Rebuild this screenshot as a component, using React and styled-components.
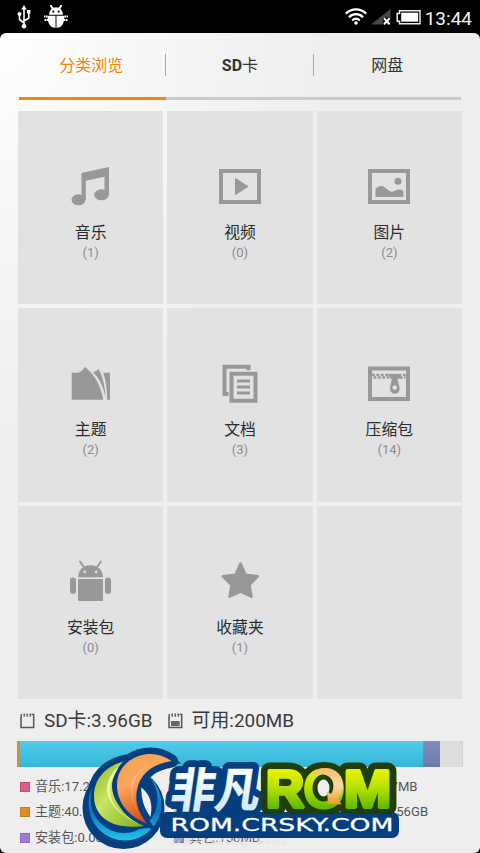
import React from 'react';
import styled, { createGlobalStyle } from 'styled-components';

const GlobalStyle = createGlobalStyle`
  * {
    box-sizing: border-box;
  }

  body {
    margin: 0;
    background: #000;
    font-family: Roboto, 'Noto Sans CJK SC', sans-serif;
    color: #333;
  }

  svg {
    display: block;
  }
`;

const Screen = styled.div`
  position: relative;
  width: 480px;
  height: 853px;
  overflow: hidden;
  display: flex;
  flex-direction: column;
  background: #000;
`;

const StatusBar = styled.header`
  height: 33px;
  flex: none;
  display: flex;
  align-items: center;
  justify-content: space-between;
  padding: 0 8px 0 17px;
`;

const StatusGroup = styled.div`
  display: flex;
  align-items: center;
  gap: ${(props) => props.$gap}px;
`;

const Clock = styled.span`
  font-size: 19px;
  line-height: 33px;
  color: #f4f4f4;
  padding-top: 4px;
`;

const Panel = styled.main`
  flex: 1;
  display: flex;
  flex-direction: column;
  padding: 0 18px;
  border-radius: 6px;
  background: radial-gradient(ellipse 330px 420px at 0 0, #fff 0, #f8f8f8 35%, #eee 100%);
`;

const Tabs = styled.nav`
  display: grid;
  grid-template-columns: repeat(3, 1fr);
  height: 67px;
  flex: none;
  margin: 0 1px;
`;

const Tab = styled.div`
  position: relative;
  display: flex;
  justify-content: center;
  padding: 21px ${(props) => (props.$active ? 3 : 0)}px 0 0;
  font-size: 16px;
  line-height: 24px;
  color: ${(props) => (props.$active ? '#f5850a' : '#333')};
  border-bottom: 3px solid ${(props) => (props.$active ? '#f5850a' : '#cbcbcb')};

  b {
    font-weight: 700;
  }

  &:not(:first-child)::before {
    content: '';
    position: absolute;
    left: -1px;
    top: 21px;
    width: 1px;
    height: 22px;
    background: #aaa;
  }
`;

const Grid = styled.section`
  display: grid;
  grid-template-columns: repeat(3, 1fr);
  grid-template-rows: repeat(3, 1fr);
  gap: 4px;
  height: 588px;
  flex: none;
  margin-top: 11px;
`;

const Tile = styled.div`
  display: flex;
  flex-direction: column;
  align-items: center;
  padding-top: 52px;
  background: #e2e2e2;
`;

const TileLabel = styled.div`
  margin-top: 11px;
  font-size: 15.8px;
  line-height: 22px;
  color: #2c2c2c;
`;

const TileCount = styled.div`
  font-size: 13px;
  line-height: 18px;
  color: #8c8c8c;
`;

const Storage = styled.div`
  display: flex;
  align-items: center;
  height: 42px;
  padding: 2px 0 0 2px;
`;

const StorageText = styled.span`
  margin: 0 15px 0 9px;
  font-size: 18.9px;
  line-height: 24px;
  color: #3a3a3a;
`;

const UsageBar = styled.div`
  display: flex;
  flex: none;
  height: 26px;
  margin: 0 -1px;
  background: #ddd;
  border: 1px solid #d3d3d3;
  border-width: 0 1px 0 0;
`;

const UsagePart = styled.div`
  width: ${(props) => props.$width}px;
  background: ${(props) => props.$fill};
`;

const Legend = styled.div`
  display: grid;
  grid-template-columns: 154px 154px 1fr;
  grid-auto-rows: 25.5px;
  margin: 7px 0 0 2px;
`;

const LegendItem = styled.div`
  display: flex;
  align-items: center;
  gap: 5px;
  white-space: nowrap;
  font-size: 13.1px;
  line-height: 20px;
  color: #555;
`;

const Swatch = styled.i`
  width: 10px;
  height: 10px;
  background: ${(props) => props.$color};
  box-shadow: inset 0 0 0 1px rgba(0, 0, 0, 0.12);
`;

const LogoOverlay = styled.svg`
  position: absolute;
  left: 78px;
  top: 743px;
  width: 326px;
  height: 110px;
`;

const GREY = '#989898';

const UsbIcon = () => (
  <svg width="14" height="24" viewBox="0 0 14 24" fill="none" stroke="#fff" strokeWidth="1.6">
    <path d="M7 3v18M7 18 2.500 14.500V9.500M7 16l4.800-3V8" />
    <path d="M7 0l2.800 4.500H4.200zM10 5h3.400v3.400H10z" fill="#fff" stroke="none" />
    <circle cx="2.500" cy="9" r="2" fill="#fff" stroke="none" />
    <circle cx="7" cy="21.300" r="2.300" fill="#fff" stroke="none" />
  </svg>
);

const BugIcon = () => (
  <svg width="24" height="24" viewBox="0 0 24 24">
    <path d="M7 1l2 3M17 1l-2 3" stroke="#fff" strokeWidth="2.200" strokeLinecap="round" />
    <path d="M5 9.800a7 7.500 0 0 1 14 0z" fill="#fff" />
    <path d="M3.500 10.800h8v12.200C6 22.500 3.500 18.500 3.500 10.800zM12.500 10.800h8c0 7.700-2.500 11.700-8 12.200z" fill="#fff" />
    <circle cx="9.300" cy="6.600" r="1.100" />
    <circle cx="14.700" cy="6.600" r="1.100" />
    <path d="M0 11.500h3.500M.5 15h3.500M20.500 11.500H24M20 15h3.500" stroke="#fff" strokeWidth="2" strokeDasharray="1.500 .5" />
  </svg>
);

const WifiIcon = () => (
  <svg width="22" height="17" viewBox="0 0 22 17" fill="none" stroke="#fff" strokeWidth="2.200">
    <path d="M.8 5.600C6.500-.1 15.500-.1 21.200 5.600M4 9.200c4-4 10-4 14 0M7.200 12.500c2.300-2.200 5.300-2.200 7.600 0" />
    <circle cx="11" cy="15" r="1.800" fill="#fff" stroke="none" />
  </svg>
);

const SignalIcon = () => (
  <svg width="21" height="18" viewBox="0 0 21 18">
    <path d="M0 16.500 19.500 1v15.500z" fill="#464646" />
    <path d="M12.800 10.300l6 6.200M18.800 10.300l-6 6.200" stroke="#000" strokeWidth="4.500" />
    <path d="M13 10.300l5.600 6M18.600 10.300l-5.600 6" stroke="#fff" strokeWidth="2" />
  </svg>
);

const BatteryIcon = () => (
  <svg width="25" height="19" viewBox="0 0 25 19">
    <path d="M3.500 3.700h20.500v13H3.500v-2.400H1.200V6.500h2.300z" fill="none" stroke="#eee" strokeWidth="1.500" />
    <path d="M5.200 5.700h17v9h-17z" fill="#fff" />
  </svg>
);

// every tile icon is drawn on a 48x48 box
const icons = {
  music: (
    <g transform="translate(-1 -.5)">
      <path d="M15.500 10.500 43 4.500v27.500h-4.500V14.200L19.800 18.200v19.300h-4.300z" />
      <ellipse cx="12.500" cy="37.300" rx="7" ry="5.500" />
      <ellipse cx="35.500" cy="32.300" rx="7.300" ry="5.500" />
    </g>
  ),
  video: (
    <>
      <path fillRule="evenodd" d="M3 6h42v35H3zM7 10v27h34V10z" />
      <path d="M19.500 15.500 32 23.500 19.500 31.500z" stroke={GREY} strokeLinejoin="round" />
    </>
  ),
  image: (
    <>
      <path fillRule="evenodd" d="M3 6h42v35H3zM7 10v27h34V10z" />
      <circle cx="33" cy="18.300" r="3.500" />
      <path d="M10.500 34v-8c3-3.500 7-4 10-1l4 3c3 2 5-.5 8-1.300 3-.7 5.500 0 6 2V34z" />
    </>
  ),
  theme: (
    <>
      <path d="M4.700 12.700h5.800c3-.3 5-2.500 7.500-5.700C28 15 34 26 36.300 39.700H4.700z" />
      <path d="M26 12c3-.3 4-1.700 5.500-3 4.500 8 6.500 17.500 7.200 29.500C36.500 27 33 19 26 12z" />
      <path d="M36.200 12.800H43v26.900h-2.800c-.1-10-1-18.500-4-26.900z" />
    </>
  ),
  doc: (
    <>
      <path d="M6.500 4.700h28v5.500h-4V8.700h-20V32h2v4h-6z" />
      <path fillRule="evenodd" d="M13.500 11.700h28v31h-28zM17.500 15.700v23h20v-23z" />
      <path d="M21 19.500h13v3H21zM21 25.500h13v3H21zM21 31.500h13v3H21z" />
    </>
  ),
  zip: (
    <>
      <path fillRule="evenodd" d="M3 6.500h42v34.500H3zM7 10.500v26.500h34V10.500z" />
      <path d="M7 15h34" stroke={GREY} strokeWidth="2.600" strokeDasharray="2.800 1.600" />
      <path d="M8.500 17.500h32" stroke={GREY} strokeWidth="2.600" strokeDasharray="2.800 1.600" />
      <path d="M22.500 14h13v4.500h-3.300l2.200 8.300a5 5 0 1 1-9.200 0l1.500-7.300z" />
      <circle cx="29.700" cy="27.500" r="2.200" fill="#e2e2e2" />
    </>
  ),
  apk: (
    <g transform="translate(-.5 -1)">
      <path d="M13.500 4.500 18 11M34.500 4.500 30 11" stroke={GREY} strokeWidth="1.900" strokeLinecap="round" />
      <path d="M11.500 20.200C12 12.500 17 8.300 24 8.300s12 4.200 12.500 11.900z" />
      <path d="M11.500 22H36.500v22H13c-1 0-1.500-.5-1.500-1.500z" />
      <rect x="3.500" y="20.500" width="6" height="16.500" rx="3" />
      <rect x="38.500" y="20.500" width="6" height="16.500" rx="3" />
      <circle cx="18.300" cy="14.800" r="1.400" fill="#e2e2e2" />
      <circle cx="29.700" cy="14.800" r="1.400" fill="#e2e2e2" />
    </g>
  ),
  star: (
    <path
      d="M24.500 5.500 29.500 16.800 41.700 18.300 33.500 27 35.500 38.700 24.500 33.500 13.500 38.700 15.500 27 6.800 18.300 19.500 16.800z"
      stroke={GREY}
      strokeWidth="2.500"
      strokeLinejoin="round"
    />
  ),
};

const SdIcon = ({ filled }) => (
  <svg width="15" height="16" viewBox="0 0 15 16" fill="none" stroke="#555" strokeWidth="1.500">
    <path d="M11.500 1.500h2.200V14.500H1V4" />
    <path d="M1.200 4.800V1M4.200 3.800V.5M7.200 3.800V.5M10.200 3.800V.5" strokeWidth="1.400" />
    {filled && <path d="M3 8h8.700v5H3z" fill="#666" stroke="none" />}
  </svg>
);

const categories = [
  { icon: 'music', label: '音乐', count: 1 },
  { icon: 'video', label: '视频', count: 0 },
  { icon: 'image', label: '图片', count: 2 },
  { icon: 'theme', label: '主题', count: 2 },
  { icon: 'doc', label: '文档', count: 3 },
  { icon: 'zip', label: '压缩包', count: 14 },
  { icon: 'apk', label: '安装包', count: 0 },
  { icon: 'star', label: '收藏夹', count: 1 },
];

const usage = [
  { width: 3, fill: '#dd8b27' },
  { width: 403, fill: 'linear-gradient(#50cdea, #35b5d8)' },
  { width: 17, fill: 'linear-gradient(#8090bd, #6c7bab)' },
];

const legend = [
  { label: '音乐:17.2MB', color: '#dd5a8b' },
  { label: '视频:0.00B', color: '#5aa9dd' },
  { label: '图片:4.77MB', color: '#7fb84a' },
  { label: '主题:40.1MB', color: '#dd8f24' },
  { label: '文档:0.1MB', color: '#d9c84a' },
  { label: '压缩包:3.56GB', color: '#46c3e2' },
  { label: '安装包:0.00B', color: '#9c7bd6' },
  { label: '其它:158MB', color: '#7887b5' },
];

const crest = 'M171.700 761C163 755 154 753 145 754.500C129 757 117 769 117 785C117 804 130 817 147 823.500C138 812 134.500 801 137 790C140 774 152 764 171.700 761Z';
const leaf = 'M126 761C106 765 94 779 94 796C94 817 112 831 147 825.500C126 815 113 804 112 787C112 777 117 768 126 761Z';

const RomLetters = () => (
  <>
    <text x="266" y="806.500" textLength="38" lengthAdjust="spacingAndGlyphs">R</text>
    <text x="304" y="806.500" textLength="40" lengthAdjust="spacingAndGlyphs">O</text>
    <text x="344" y="806.500" textLength="47" lengthAdjust="spacingAndGlyphs">M</text>
  </>
);

const SiteLogo = () => (
  <LogoOverlay viewBox="78 743 326 110">
    <defs>
      <linearGradient id="ring" x1="0" y1="0" x2="0" y2="1">
        <stop offset="0" stopColor="#20a8e0" />
        <stop offset=".6" stopColor="#0d72bb" />
        <stop offset="1" stopColor="#20c6ec" />
      </linearGradient>
      <linearGradient id="leaf" x1="0" y1="0" x2="1" y2="1">
        <stop offset="0" stopColor="#86b520" />
        <stop offset=".4" stopColor="#c9e566" />
        <stop offset="1" stopColor="#78ad12" />
      </linearGradient>
      <linearGradient id="crest" x1="0" y1="0" x2=".4" y2="1">
        <stop offset="0" stopColor="#f5a04c" />
        <stop offset=".45" stopColor="#f9a75e" />
        <stop offset="1" stopColor="#d44c0e" />
      </linearGradient>
      <linearGradient id="ice" x1="0" y1="0" x2="0" y2="1">
        <stop offset=".3" stopColor="#fff" />
        <stop offset="1" stopColor="#bfe3f8" />
      </linearGradient>
      <linearGradient id="lime" gradientUnits="userSpaceOnUse" x1="0" y1="768" x2="0" y2="808">
        <stop offset="0" stopColor="#eff500" />
        <stop offset=".5" stopColor="#b5e000" />
        <stop offset="1" stopColor="#62b800" />
      </linearGradient>
      <linearGradient id="amber" x1="0" y1="0" x2="0" y2="1">
        <stop offset="0" stopColor="#f4bd72" />
        <stop offset=".5" stopColor="#fbd9a0" />
        <stop offset="1" stopColor="#eb9a22" />
      </linearGradient>
    </defs>

    <text x="171" y="844" fontFamily="Liberation Sans" fontWeight="700" fontStyle="italic" fontSize="14" fill="#fff" stroke="#bbb" strokeWidth=".5" textLength="116" opacity=".5">www.crsky.com</text>

    {/* round emblem */}
    <g stroke="#063f7f" strokeWidth="13" strokeLinejoin="round" fill="#063f7f">
      <path d={crest} />
      <path d={leaf} />
      <circle cx="123.500" cy="808" r="34.500" />
    </g>
    <circle cx="125" cy="804" r="36.500" fill="url(#ring)" />
    <ellipse cx="124" cy="799" rx="33.500" ry="34" fill="#063f7f" />
    <path d="M142 789C149 795 152 804 150 815C145 808 142 799 142 789Z" fill="#eee" stroke="#eee" strokeWidth="1.500" />
    <path d={leaf} fill="url(#leaf)" stroke="#063f7f" strokeWidth="5" paintOrder="stroke" />
    <path d="M123 764C100 778 99 808 143 825C107 811 100 787 123 764Z" fill="#eef8b5" stroke="#e3f397" strokeWidth=".4" />
    <path d={crest} fill="url(#crest)" stroke="#063f7f" strokeWidth="7" paintOrder="stroke" />
    <path d="M169 760.500C133 763 121 791 144 820C122 793 129 764 169 760.500Z" fill="#ffe1b5" opacity=".85" />

    {/* backing plates */}
    <rect x="160" y="812" width="239" height="26" rx="7" fill="#063f7f" />
    <path d="M178 773H248V814H170Z" fill="#063f7f" />
    <g transform="translate(169 806.500) skewX(-8)" fontFamily="Noto Sans CJK SC" fontWeight="700" fontSize="47">
      <text fill="#063f7f" stroke="#063f7f" strokeWidth="14" strokeLinejoin="round" textLength="89" lengthAdjust="spacingAndGlyphs">非凡</text>
      <text fill="url(#ice)" stroke="#eaf6fd" strokeWidth=".6" textLength="89" lengthAdjust="spacingAndGlyphs">非凡</text>
    </g>

    <g fontFamily="Liberation Sans" fontWeight="700" fontSize="52">
      <g fill="#203f08" stroke="#203f08" strokeWidth="17" strokeLinejoin="round">
        <RomLetters />
      </g>
      <rect x="162" y="814" width="235" height="22" rx="6" fill="#063f7f" />
      <g fill="url(#lime)" stroke="url(#lime)" strokeWidth="4" strokeLinejoin="round">
        <RomLetters />
      </g>
    </g>
    <ellipse cx="323.500" cy="788" rx="8.500" ry="11" fill="#eee" stroke="#203f08" strokeWidth="5" />
    <path d="M309 777C315 766 334 764 341 777C345 786 343 793 338 799L341.500 804.500L328 804L327 791L331 794C335 788 334 779 328 776C321 772 315 773 309 777Z" fill="url(#amber)" />

    <text x="170.500" y="831" fontFamily="DejaVu Sans" fontSize="18" fill="#fff" stroke="#fff" strokeWidth=".3" textLength="223" lengthAdjust="spacingAndGlyphs">ROM.CRSKY.COM</text>
    <path d="M168 809h7v3h-7z" fill="#fff" />
    <path d="M173.500 809h3v3h-3z" fill="#e3c64a" />
  </LogoOverlay>
);

const App = () => {
  return (
    <Screen>
      <GlobalStyle />
      <StatusBar>
        <StatusGroup $gap={13}>
          <UsbIcon />
          <BugIcon />
        </StatusGroup>
        <StatusGroup $gap={4}>
          <WifiIcon />
          <SignalIcon />
          <BatteryIcon />
          <Clock>13:44</Clock>
        </StatusGroup>
      </StatusBar>

      <Panel>
        <Tabs>
          <Tab $active>分类浏览</Tab>
          <Tab><b>SD</b>卡</Tab>
          <Tab>网盘</Tab>
        </Tabs>

        <Grid>
          {categories.map((item) => (
            <Tile key={item.icon}>
              <svg width="48" height="48" viewBox="0 0 48 48" fill={GREY}>
                {icons[item.icon]}
              </svg>
              <TileLabel>{item.label}</TileLabel>
              <TileCount>({item.count})</TileCount>
            </Tile>
          ))}
          <Tile />
        </Grid>

        <Storage>
          <SdIcon />
          <StorageText>SD卡:3.96GB</StorageText>
          <SdIcon filled />
          <StorageText>可用:200MB</StorageText>
        </Storage>

        <UsageBar>
          {usage.map((part) => (
            <UsagePart key={part.fill} $width={part.width} $fill={part.fill} />
          ))}
        </UsageBar>

        <Legend>
          {legend.map((item) => (
            <LegendItem key={item.label}>
              <Swatch $color={item.color} />
              {item.label}
            </LegendItem>
          ))}
        </Legend>
      </Panel>

      <SiteLogo />
    </Screen>
  );
};

export default App;
